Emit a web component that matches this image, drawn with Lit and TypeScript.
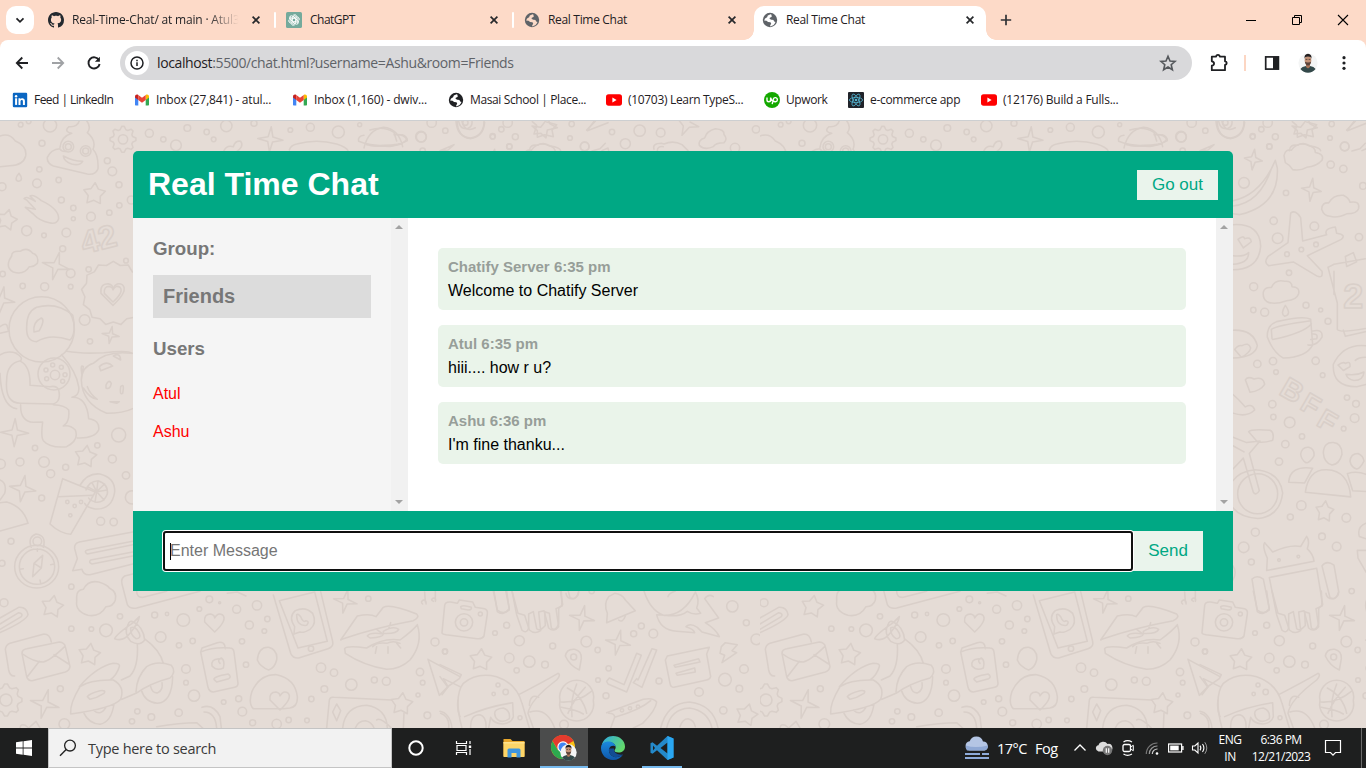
import { LitElement, html, svg, css } from "lit";
import { customElement } from "lit/decorators.js";
import { styleMap } from "lit/directives/style-map.js";

/* ---------- geometry helpers for the wallpaper ---------- */

// Star-like closed path: n points, outer radius R, inner radius r.
const burst = (cx: number, cy: number, n: number, R: number, r: number, rot = 0) => {
  let d = "";
  for (let i = 0; i < n * 2; i++) {
    const a = ((rot - 90) * Math.PI) / 180 + (i * Math.PI) / n;
    const q = i % 2 ? r : R;
    d += `${i ? "L" : "M"}${(cx + q * Math.cos(a)).toFixed(1)} ${(cy + q * Math.sin(a)).toFixed(1)}`;
  }
  return d + "Z";
};

// Cog with flat teeth.
const cog = (cx: number, cy: number, n: number, R: number, r: number) => {
  let d = "";
  for (let i = 0; i < n * 4; i++) {
    const a = ((i - 0.5) * Math.PI * 2) / (n * 4);
    const q = i % 4 < 2 ? R : r;
    d += `${i ? "L" : "M"}${(cx + q * Math.cos(a)).toFixed(1)} ${(cy + q * Math.sin(a)).toFixed(1)}`;
  }
  return d + "Z";
};

const star = (x: number, y: number, rot = 8, R = 34) => burst(x, y, 5, R, R * 0.56, rot);
const spark = (x: number, y: number, rot = 8, R = 38) => burst(x, y, 4, R, R * 0.27, rot);

const heart = (x: number, y: number, s: number) =>
  `M${x} ${y + s}L${x - s} ${y}Q${x - s * 1.1} ${y - s * 0.8} ${x - s * 0.4} ${y - s * 0.8}Q${x} ${y - s * 0.7} ${x} ${y - s * 0.4}Q${x + s * 0.3} ${y - s} ${x + s * 0.8} ${y - s * 0.7}Q${x + s * 1.3} ${y - s * 0.2} ${x} ${y + s}Z`;

interface Sheet {
  x: number;
  y: number;
  sy?: number;
  paths: string[];
  dots: number[][];
  words?: { t: string; x: number; y: number; size: number; rot: number }[];
}

const sheets: Sheet[] = [
  {
    x: 0, y: 120,
    paths: [
      "M0 48Q28 38 45 62Q82 78 77 108Q70 136 30 137L0 140",
      "M180 82Q184 50 215 40Q190 34 207 20Q232 22 238 2M260 2Q275 22 262 38Q290 62 279 88Q296 106 294 146Q286 166 262 162L160 138Q140 130 142 112Q152 88 180 86Q184 96 200 94",
      "M190 108Q220 124 248 124Q240 138 215 132Q192 125 190 108Z",
      cog(369, 58, 8, 39, 30),
      spark(811, 58, 4, 38),
      "M868 90Q872 76 890 72Q950 56 1010 72Q1040 82 1044 92",
      "M672 92Q680 74 700 80Q706 60 722 64Q734 80 706 98",
      "M1092 84Q1104 30 1150 22Q1196 26 1208 80M1092 46Q1072 48 1076 64Q1110 78 1150 76Q1200 76 1222 62Q1222 48 1206 44M1100 74Q1150 84 1205 72",
      "M57 160Q40 180 56 184Q72 180 57 160Z",
      "M72 236Q78 226 106 244L90 228Q100 222 124 242Q176 266 176 296Q170 314 148 308Q118 302 102 284L76 262L106 268L80 240Z",
      star(283, 222, 4, 34), star(20, 300, 14, 32), spark(168, 438, 14, 42), spark(5, 540, 10, 40), spark(332, 645, 10, 26),
      "M35 408Q34 392 60 394Q82 380 98 400Q118 406 112 430Q100 442 88 440Q72 466 40 456Q18 444 28 420Z",
      burst(340, 520, 13, 96, 86, 0), heart(339, 520, 36), heart(339, 520, 26),
      "M80 620Q80 575 110 562Q170 545 218 585Q230 640 210 660Q150 640 110 665Q78 665 80 620ZM102 636Q98 606 124 594Q136 600 118 632Z",
      "M50 700Q20 690 0 705M0 620Q20 605 22 620L26 634L0 640M48 700Q70 712 62 722Q20 730 20 780Q14 850 62 850L160 852Q184 845 176 810Q170 796 150 800L90 796Q92 740 62 724",
      "M0 760Q4 860 50 866M200 694Q245 702 312 698Q386 690 396 700M185 704Q230 756 236 800Q240 826 216 832Q260 830 266 896Q300 900 296 930Q284 956 232 954M62 854Q60 904 100 907L128 906Q122 950 130 962Q150 985 200 980Q238 960 226 930Q210 914 190 918Q210 906 206 870Q196 856 160 854",
      "M396 700Q320 690 280 730Q246 740 244 780Q246 850 320 880Q370 880 398 866M250 740Q240 730 246 765ZM298 740Q320 720 338 738L302 752ZM262 800Q270 822 292 838Q270 836 250 804M318 795Q326 776 334 790Q330 810 318 804ZM362 800Q374 788 368 820Q358 826 362 800ZM340 708Q360 696 362 720ZM330 845H358L350 850Z",
      spark(44, 938, 2, 42), star(257, 1010, 8, 34), burst(68, 1106, 4, 40, 12, 10),
      "M188 1076L286 1116L212 1243Q180 1240 150 1212Z M175 1130L278 1126",
      "M240 1096Q262 1058 300 1062Q346 1074 344 1116Q336 1170 285 1167Q260 1162 254 1150",
      "M258 1110Q266 1084 294 1082Q326 1092 322 1122Q312 1148 290 1147Q270 1142 266 1134M290 1115L262 1100M290 1115L294 1082M290 1115L322 1110M290 1115L312 1140M290 1115L285 1147M290 1115L314 1092M290 1115L276 1088",
      "M0 1080Q22 1090 14 1120L0 1140M0 1148L20 1146Q70 1160 84 1210L0 1233",
    ],
    dots: [[150, 16, 20], [86, 4, 7], [62, 14, 7], [126, 70, 9], [205, 80, 16], [205, 80, 9], [257, 93, 16], [257, 93, 9], [369, 58, 14], [448, 40, 12], [490, 58, 8], [562, 24, 10], [528, 76, 16], [620, 36, 8], [641, 58, 7], [679, 18, 17], [762, 10, 9], [871, 30, 7], [931, 22, 12], [1015, 36, 18], [1079, 14, 6], [322, 122, 9], [337, 154, 13], [176, 180, 8], [111, 190, 13], [118, 148, 8], [184, 240, 9], [220, 264, 8], [220, 296, 6], [273, 290, 13], [357, 194, 9], [358, 256, 8], [328, 278, 8], [394, 240, 12], [80, 332, 15], [132, 346, 7], [199, 338, 13], [188, 386, 9], [6, 200, 12], [378, 422, 7], [266, 448, 8], [212, 460, 13], [8, 462, 8], [68, 498, 8], [134, 500, 12], [212, 500, 7], [125, 628, 98], [254, 600, 16], [270, 664, 8], [162, 762, 48], [165, 765, 14], [158, 735, 6], [184, 742, 6], [195, 764, 6], [188, 784, 6], [138, 750, 6], [140, 776, 6], [105, 984, 8], [356, 945, 21], [292, 976, 8], [337, 1017, 12], [60, 1026, 12], [132, 1026, 16], [197, 1042, 9], [152, 1061, 12], [378, 1066, 11], [2, 1032, 14], [125, 1134, 9], [202, 1146, 5], [243, 1146, 5], [224, 1158, 5], [211, 1186, 5], [396, 1132, 20]],
    words: [{ t: "42", x: 252, y: 402, size: 96, rot: -14 }],
  },
  {
    x: 370, y: 120, sy: 2.579,
    paths: [
      "M0 26Q40 14 72 32L80 54M72 38Q104 36 110 50Q100 64 60 68L0 66M262 3Q262 42 300 48Q340 44 344 6M276 4Q286 34 316 20",
      "M487 4L500 14L492 36L512 34L528 46L532 26L562 20L540 10L536 2M650 26L676 3M666 80L690 74L706 60",
      burst(370, 102, 4, 27, 9, 8), burst(544, 180, 4, 30, 9, 8),
      "M462 92Q466 74 484 78Q504 54 536 66Q556 70 556 84Q584 88 576 104Q560 120 530 122Q510 132 488 128Q480 116 466 110Z",
      "M575 230Q576 212 596 214Q610 192 640 194Q656 200 660 212Q690 208 686 228Q682 242 650 242Q620 254 600 248Q582 248 575 230Z",
      "M309 222Q390 214 424 126L436 104L442 124Q448 220 330 244L309 242M309 208Q380 196 424 126",
      "M482 240Q496 230 512 252L518 312L590 296Q580 280 616 276L620 292Q650 296 634 308L532 350L576 390Q580 410 560 402L490 366L416 376Q400 368 414 352L474 316Z",
      "M309 270Q390 266 392 326Q386 386 309 386M324 308Q340 296 344 306Q362 300 364 314L340 330ZM309 350Q340 354 356 342Q356 370 309 372",
      "M400 444Q404 430 424 432Q436 410 464 416Q486 414 486 430Q510 430 506 448Q500 464 470 466Q430 478 410 468Q398 460 400 444Z",
      "M466 478Q450 500 464 506Q486 502 466 478ZM412 560Q410 530 440 520Q520 504 542 514L548 580Q530 612 460 614Q430 600 412 560ZM426 564L424 540Q440 530 542 518M428 566Q520 550 544 526M548 544Q580 538 576 560Q560 584 534 580M546 552Q566 550 560 564L542 566",
      "M594 380L612 372L706 358M594 380L622 472V540Q630 550 706 538M612 450V390M646 352L670 342L680 366L650 378ZM640 542L646 558L706 546",
      "M708 582Q640 576 610 630Q606 688 680 688L708 682M624 632Q640 622 646 628Q662 620 660 636L640 646ZM676 620Q686 612 706 612M648 656Q680 660 702 650Q700 672 672 672Q652 668 648 656Z",
      "M309 542Q370 540 382 582Q376 612 309 614M314 592Q324 580 336 582Q356 572 362 588Q360 600 334 612ZM346 670Q352 660 372 668Q400 660 404 682Q390 700 360 702ZM309 708Q326 720 346 740Q368 730 374 748Q350 768 309 756",
      "M309 818L350 832L390 828L358 860L388 956Q378 970 370 960L340 872L309 900M356 804Q362 796 420 800Q434 806 428 826Q400 834 382 830ZM309 840L342 856M309 930Q330 906 374 902Q450 906 458 962Q450 1022 384 1028Q330 1024 309 1000",
      "M476 934Q480 890 548 898L524 936ZM526 960Q536 900 590 902Q656 904 662 972ZM580 858Q582 830 610 832Q636 834 636 862Q628 888 606 890Q582 884 580 858ZM512 862Q516 842 536 844Q554 848 552 866Q540 884 528 884Q514 876 512 862ZM660 880Q662 860 684 860Q700 866 702 880Q690 900 680 900Q664 896 660 880ZM652 912Q680 904 708 914M652 912L668 956L708 958",
      burst(584, 1010, 5, 28, 16, 6),
      "M410 1162L412 1130Q396 1100 404 1090L428 1114Q480 1094 512 1100L530 1074Q540 1084 532 1106Q550 1120 552 1138ZM418 1180L560 1156L578 1250L566 1260V1300Q556 1320 544 1310L538 1272L524 1268L526 1304Q510 1320 500 1312L490 1268L476 1274V1310Q470 1326 456 1316L440 1276ZM366 1184Q380 1172 400 1184L418 1260Q400 1280 382 1268ZM576 1150Q590 1134 612 1148L626 1216Q620 1240 600 1232Z",
      "M708 1040Q680 1050 688 1074L708 1080M682 1110L708 1110M682 1110L684 1130L708 1166M309 1150Q322 1166 309 1186",
    ],
    dots: [[154, 44, 15], [368, 42, 8], [394, 24, 8], [418, 68, 8], [602, 115, 11], [644, 68, 13], [640, 126, 11], [342, 162, 16], [468, 188, 8], [699, 170, 10], [431, 260, 11], [443, 305, 16], [553, 274, 13], [687, 302, 11], [471, 346, 7], [514, 334, 7], [558, 321, 7], [477, 394, 8], [371, 430, 12], [370, 490, 8], [404, 496, 12], [528, 478, 9], [572, 490, 6], [594, 519, 9], [382, 629, 11], [429, 622, 11], [438, 650, 7], [557, 621, 11], [578, 658, 7], [651, 716, 8], [678, 732, 10], [674, 769, 13], [641, 796, 7], [427, 733, 11], [430, 766, 8], [479, 780, 16], [466, 836, 11], [516, 816, 8], [447, 881, 11], [383, 964, 60], [514, 994, 14], [481, 1024, 9], [649, 1026, 13], [376, 1063, 12], [341, 1102, 16], [364, 1140, 9], [576, 1074, 10], [620, 1100, 13], [447, 1135, 4], [505, 1126, 4], [665, 1215, 8]],
    words: [{ t: "2", x: 640, y: 484, size: 108, rot: 0 }, { t: "B", x: 444, y: 706, size: 88, rot: 30 }, { t: "F", x: 506, y: 744, size: 84, rot: 30 }, { t: "F", x: 556, y: 786, size: 84, rot: 30 }],
  },
  {
    x: 0, y: 500,
    paths: [
      "M44 200A66 64 0 1 1 176 200A66 64 0 1 1 44 200M58 200A52 52 0 1 1 164 200A52 52 0 1 1 58 200M94 142Q82 112 108 102Q140 106 130 142M98 230L102 190L128 166L124 204ZM102 190L124 204M112 146L112 154M162 192L152 194M60 208L70 206M122 250L120 240",
      "M398 96L238 126Q222 130 224 146L232 176L218 212L246 208Q250 226 270 224L398 192M398 124L262 150Q250 154 262 162L398 134M398 156L272 180Q264 188 276 192L398 168M398 222L374 228Q362 236 366 252L382 314Q390 328 410 324L600 274M410 274Q410 294 430 292L500 274",
      "M230 290Q230 270 250 268Q264 240 296 246Q322 254 328 264Q352 276 346 300Q340 320 318 320Q300 352 264 346Q226 334 230 304Z",
      "M0 354L56 322Q80 320 84 344Q80 362 0 398M0 372L56 338Q70 340 64 350L0 388",
      star(157, 320, 10, 34), star(268, 464, 8, 34), "M682 280L712 276L738 288",
      "M44 528Q30 530 26 510L16 448Q18 434 30 430L132 402Q150 402 154 426M66 460Q66 448 80 446L178 426Q194 428 196 440L210 500Q208 512 196 516L96 542Q84 542 80 530ZM68 462Q100 486 130 486Q150 482 194 440M82 530L118 484M206 492L162 464",
      cog(18, 600, 8, 48, 38), spark(134, 612, 14, 44),
      "M344 416Q352 400 400 368L418 350Q416 368 390 400Q370 426 344 416ZM384 374Q370 400 392 424Q420 440 434 420Q430 380 400 366Q388 360 384 374ZM392 384Q390 404 408 416Q424 416 418 400Q406 376 392 384ZM412 432Q416 500 390 528L364 540M436 418Q480 450 490 490M408 576Q410 530 440 500Q470 480 514 496Q530 516 510 534Q450 550 408 580L366 598M212 638Q210 610 240 560Q270 538 340 540Q376 560 362 598Q340 625 212 642ZM238 560Q290 500 340 490Q362 490 358 500Q350 526 330 540M262 590Q268 580 300 572Q320 570 312 580Q290 594 270 598ZM252 640Q266 670 300 673Q334 666 342 612M280 630Q300 650 318 622M424 570Q434 606 472 610Q516 606 518 530M452 560Q458 582 474 578Q490 570 486 548",
      heart(644, 366, 30),
      "M820 285L872 460Q880 476 896 474L984 446Q1002 440 998 424L962 275M838 302L944 276L982 424L894 444ZM882 402L884 380Q864 350 886 332Q916 318 938 340Q952 370 930 388Q910 400 900 396ZM890 344Q890 380 920 376Q930 364 918 362Q910 370 902 350Q894 340 890 344Z",
      spark(1036, 304, 12, 36), "M1268 312Q1260 306 1270 300Q1280 300 1278 312M1276 306L1274 276M1300 304Q1290 300 1300 294Q1310 294 1306 304L1306 274",
      "M1022 420L1072 348Q1110 340 1128 350L1150 322Q1170 310 1250 342Q1260 352 1240 362Q1130 382 1030 416ZM1034 446Q1040 436 1100 444Q1150 412 1200 420Q1240 390 1252 374Q1270 430 1230 480Q1200 508 1160 508Q1090 496 1036 460ZM1102 408Q1110 396 1150 402Q1150 412 1110 414ZM1150 394Q1180 376 1196 388Q1190 402 1150 400ZM1130 388L1146 400M1166 386L1172 368M1118 440Q1130 426 1160 430Q1180 420 1200 430M1126 460L1130 440M1164 460V440M1190 430L1202 444",
      "M602 456L606 444L652 428Q670 424 674 436L676 446M602 456Q640 440 690 444Q700 444 702 456L714 550Q714 560 704 562L640 576Q628 576 624 562ZM656 476Q632 478 636 498Q650 514 670 504Q676 482 664 474Q650 480 660 490M642 538Q640 530 684 522Q696 530 686 536L650 546Z",
      "M772 480Q776 440 806 442Q834 450 830 480Q824 504 806 510Q780 500 772 480ZM760 626Q744 610 756 574Q780 522 830 524Q886 536 892 590Q894 620 870 624L850 626Z",
      heart(840, 600, 30), "M60 684Q62 670 76 676L86 684L108 664L120 684M606 622Q640 610 660 650L664 684M612 636Q646 636 650 684M470 680Q540 668 590 668L608 684",
      "M980 684L988 600Q990 590 1002 592L1176 600M1010 612L1022 632L1010 662L998 636ZM1028 684Q1036 618 1100 616Q1160 626 1162 684M1066 684Q1074 662 1096 662Q1116 666 1122 684M1130 660Q1140 650 1174 684",
      star(1205, 612, 6, 34), "M1212 640L1210 684M1322 640Q1350 650 1346 684M1374 600Q1370 630 1380 650",
      "M1284 478L1380 530M1284 478L1318 586L1344 560L1330 536L1380 560",
    ],
    dots: [[112, 124, 13], [33, 124, 9], [12, 308, 12], [6, 190, 9], [302, 64, 12], [341, 66, 11], [214, 260, 8], [360, 349, 8], [318, 391, 19], [274, 387, 7], [214, 386, 8], [464, 345, 9], [501, 342, 5], [550, 360, 19], [482, 411, 16], [537, 436, 8], [578, 423, 8], [598, 327, 7], [628, 298, 10], [659, 308, 3], [710, 328, 12], [771, 316, 14], [748, 375, 12], [802, 357, 8], [793, 393, 7], [726, 424, 8], [738, 494, 8], [18, 600, 18], [181, 566, 9], [558, 507, 13], [558, 548, 7], [582, 587, 17], [671, 606, 7], [716, 596, 9], [727, 635, 13], [412, 634, 8], [454, 651, 10], [396, 664, 8], [536, 638, 11], [193, 672, 16], [758, 668, 9], [830, 672, 14], [866, 660, 8], [921, 661, 7], [934, 597, 8], [973, 567, 10], [963, 503, 14], [1002, 518, 11], [1054, 554, 17], [1123, 540, 9], [1159, 544, 12], [1105, 296, 8], [1260, 516, 11], [1268, 548, 7], [1254, 585, 6], [1305, 426, 12], [1335, 455, 7], [1282, 646, 10], [933, 446, 8]],
  },
  {
    x: 440, y: 580,
    paths: [
      "M6 158L14 76Q16 64 32 66L52 70L58 60L98 66L106 82L134 86Q144 90 142 102L132 168Q126 178 112 176L18 164Q6 162 6 158ZM62 80Q70 74 94 82Q96 90 84 90L64 86Z",
      "M160 33L172 90Q190 106 208 90L200 33M216 33L234 100L254 106L268 150Q284 164 302 152L296 96L312 92L326 144Q342 158 356 140L348 86L366 78L364 33M378 40Q380 58 402 56Q416 50 416 36",
      spark(426, 114, 12, 38), spark(534, 188, 12, 38), star(122, 240, 4, 34), star(1114, 80, 12, 34), star(1226, 222, 4, 32), star(920, 405, 14, 34),
      "M500 128L502 100Q490 70 506 50L524 40Q546 42 556 60L586 92ZM536 120Q548 130 556 108",
      "M612 33Q630 90 670 106Q730 108 764 40M766 36Q780 60 770 84L782 100Q760 106 742 94Q720 112 676 106L650 104Q660 150 710 154Q740 156 764 158Q762 148 738 140Q750 128 772 142L786 156L838 170Q828 148 796 128L836 114L794 56Q806 40 820 50M684 50Q686 40 706 33",
      "M376 228Q380 206 404 208Q426 214 424 236L418 270Q390 258 376 228Z",
      "M500 304L508 294L552 314L590 220L604 226L560 336L504 312ZM580 308L590 296L594 300L636 206L650 210L606 322ZM676 240L682 228L808 202L800 222L812 290Q810 298 800 300L702 322Q692 322 690 310ZM702 256L776 236L780 246L706 262ZM708 280L764 264L766 276L712 286ZM844 200L856 188L892 194L876 212L890 218L846 248L854 226L840 220Z",
      "M0 254L64 284L58 296L26 318L6 344M0 290L22 320",
      "M66 444Q40 350 70 310Q110 276 170 290Q230 310 246 370L268 444M74 410Q140 380 218 368L220 410Q214 430 188 432Q160 430 152 412L146 444M92 444Q90 404 120 404Q140 410 138 444M164 400Q164 386 190 384Q212 392 208 416Q190 430 174 420Q164 412 164 400M236 344Q320 300 354 280Q364 284 350 300Q270 360 264 400L280 444M270 396Q320 380 344 444M268 376Q270 340 296 352",
      "M360 362A51 51 0 1 1 460 362A51 51 0 1 1 360 362M362 366Q410 370 454 334M382 324Q430 350 440 400M410 312Q390 360 396 410M364 382Q410 390 430 402M436 322Q400 360 384 400",
      "M500 398L610 358Q640 352 650 366Q648 390 608 430L580 444M506 400Q524 400 524 412L512 444M524 412Q600 390 632 362M662 444Q680 370 748 366Q820 374 834 444M680 444Q692 388 748 384Q804 392 816 444M720 440Q728 416 744 416Q762 420 766 440",
      "M0 394Q30 400 36 444",
    ],
    dots: [[72, 127, 26], [72, 127, 11], [121, 102, 6], [200, 136, 9], [165, 159, 7], [238, 182, 15], [338, 198, 9], [439, 185, 16], [208, 234, 14], [268, 245, 17], [315, 254, 10], [230, 271, 8], [15, 214, 8], [401, 231, 9], [473, 210, 8], [506, 265, 8], [474, 300, 7], [498, 347, 9], [604, 138, 9], [581, 161, 9], [640, 161, 13], [657, 303, 9], [777, 336, 13], [855, 299, 19], [912, 267, 13], [898, 326, 10], [850, 391, 11], [877, 79, 17], [919, 128, 9], [949, 178, 16], [174, 315, 6], [197, 336, 8], [161, 342, 5], [240, 413, 6], [372, 434, 13], [546, 391, 5], [570, 385, 5], [594, 380, 5]],
  },
  {
    x: 380, y: 118,
    paths: [
      "M456 24L482 28L496 10M456 24L472 38L472 58L494 50L520 56L516 36L530 20L500 12M642 10L622 38L684 14M898 8L910 24L906 52L928 28L956 26L930 12",
      "M228 10Q232 58 272 60Q312 54 312 10M236 10Q240 34 262 32Q278 26 276 10M180 98L222 80L204 96ZM448 98Q450 78 472 82Q490 70 510 84Q540 88 542 98M666 98L684 90L686 98",
      "M958 82Q954 66 974 60Q980 38 1006 32Q1034 34 1032 50Q1044 62 1032 74Q1006 74 1000 86Q974 98 958 82ZM822 94Q816 76 844 76L852 78Q880 66 906 80L924 98M832 98Q832 84 850 86",
    ],
    dots: [[123, 56, 16], [196, 38, 8], [155, 14, 14], [383, 14, 14], [338, 56, 7], [406, 56, 9], [388, 86, 8], [575, 18, 8], [570, 60, 7], [614, 86, 13], [696, 42, 8], [736, 77, 15], [779, 38, 17], [842, 44, 13], [1065, 90, 14], [1128, 34, 11], [256, 14, 8], [128, 98, 8]],
  },
];

const motifs = sheets.map((s) => {
  const k = 3 / (s.sy ?? 3);
  return svg`<g transform="translate(${s.x} ${s.y}) scale(.33333)">
    <g transform="scale(1 ${k})">${s.paths.map((d) => svg`<path d=${d} vector-effect="non-scaling-stroke"/>`)}</g>
    ${s.dots.map(([x, y, r]) => svg`<circle cx=${x} cy=${y * k} r=${r} vector-effect="non-scaling-stroke"/>`)}
    ${(s.words ?? []).map((w) => svg`<text transform="translate(${w.x} ${w.y * k}) rotate(${w.rot})" font-size=${w.size} vector-effect="non-scaling-stroke">${w.t}</text>`)}
  </g>`;
});

const TILE = 760;

@customElement("doodle-wallpaper")
class DoodleWallpaper extends LitElement {
  static styles = css`
    :host { display: block; width: 1366px; height: 607px; }
    svg { display: block; }
    .lines { fill: none; stroke: #d9cfc9; stroke-width: 1.55; stroke-linejoin: round; stroke-linecap: round; }
    text { font-family: "Liberation Sans", sans-serif; font-weight: bold; }
  `;
  render() {
    return html`<svg class="lines" width="1366" height="607" viewBox="0 121 1366 607" aria-hidden="true">
      ${[0, TILE].map((x) => svg`<svg x=${x} y="121" width=${TILE} height="607" viewBox="0 121 760 607">${motifs}</svg>`)}
    </svg>`;
  }
}

/* ---------- icons ---------- */

const closeIcon = html`<svg width="16" height="16" viewBox="0 0 16 16"><path d="M4.6 4.6l6.8 6.8M11.4 4.6l-6.8 6.8" stroke="#26282b" stroke-width="1.7" fill="none"/></svg>`;
const github = html`<svg width="16" height="16" viewBox="0 0 16 16"><path fill="#24292f" d="M8 0C3.58 0 0 3.58 0 8c0 3.54 2.29 6.53 5.47 7.59.4.07.55-.17.55-.38 0-.19-.01-.82-.01-1.49-2.01.37-2.53-.49-2.69-.94-.09-.23-.48-.94-.82-1.13-.28-.15-.68-.52-.01-.53.63-.01 1.08.58 1.23.82.72 1.21 1.87.87 2.33.66.07-.52.28-.87.51-1.07-1.78-.2-3.64-.89-3.64-3.95 0-.87.31-1.59.82-2.15-.08-.2-.36-1.02.08-2.12 0 0 .67-.21 2.2.82.64-.18 1.32-.27 2-.27s1.36.09 2 .27c1.53-1.04 2.2-.82 2.2-.82.44 1.1.16 1.92.08 2.12.51.56.82 1.27.82 2.15 0 3.07-1.87 3.75-3.65 3.95.29.25.54.73.54 1.48 0 1.07-.01 1.93-.01 2.2 0 .21.15.46.55.38A8.01 8.01 0 0 0 16 8c0-4.42-3.58-8-8-8z"/></svg>`;
const openai = html`<svg width="16" height="16" viewBox="0 0 16 16"><rect width="16" height="16" rx="1.6" fill="#74aa9c"/><g fill="none" stroke="#fff" stroke-width=".85">${[0, 60, 120, 180, 240, 300].map((a) => svg`<path transform="rotate(${a} 8 8)" d="M6.1 9.1V5.2a2.6 2.6 0 0 1 4.6-1.5M6.1 6.9l3.3-1.9 3.3 1.9"/>`)}</g></svg>`;
const globe = (c: string, hole: string) => html`<svg width="16" height="16" viewBox="0 0 16 16"><circle cx="8" cy="8" r="7.2" fill=${c}/><path fill=${hole} d="M8.6 2.2L5.8 3.4 5.1 5.2l-2 1.2-1 2.2 2.4.2 1.6 1.2 2.4.3.7 1.4-1 1.6v1.1c2.6-.4 4.6-2.1 5.3-4.4l-1.3-.6-.9-1.7-2.2-.2L8 6l1.6-.6.7-1.4-.7-1.6z"/><path fill=${c} d="M9.4 1.8l2.4 1.6-.6 2.2 1.7.9-.5 1.6-2-.6-2.3-.3-.7-1.3 2.3-.9z"/></svg>`;
const gmail = html`<svg width="16" height="16" viewBox="0 0 16 16"><path fill="#4285f4" d="M1 4.2v8.3c0 .6.4 1 1 1h2.3V7z"/><path fill="#34a853" d="M15 4.2v8.3c0 .6-.4 1-1 1h-2.3V7z"/><path fill="#c5221f" d="M1 4.6C1 2.8 2.8 2 4.3 3v5L1 5.6z"/><path fill="#fbbc04" d="M15 4.6c0-1.8-1.8-2.6-3.3-1.6v5L15 5.6z"/><path fill="#ea4335" d="M4.3 3L8 5.8 11.7 3v5L8 10.8 4.3 8z"/></svg>`;
const youtube = html`<svg width="16" height="16" viewBox="0 0 16 16"><rect y="2.3" width="16" height="11.4" rx="2.6" fill="#f00"/><path fill="#fff" d="M6.4 5.6v4.8L10.6 8z"/></svg>`;
const linkedin = html`<svg width="16" height="16" viewBox="0 0 16 16"><rect x=".8" y=".8" width="14.4" height="14.4" rx="1.2" fill="#0a66c2"/><g fill="#fff"><circle cx="4.1" cy="4.3" r="1.2"/><rect x="3.1" y="6.3" width="2" height="6.6"/><path d="M6.5 6.3h1.9v.9c.9-1.5 4.5-1.6 4.5 1.8v3.9h-2V9.6c0-2.1-2.4-1.9-2.4 0v3.3h-2z"/></g></svg>`;
const upwork = html`<svg width="16" height="16" viewBox="0 0 16 16"><circle cx="8" cy="8" r="8" fill="#14a800"/><path d="M3 5.6v2.3a1.8 1.8 0 0 0 3.6 0V5.6c.5 1.8 1.5 3.4 2.7 4M8.2 12.2l1.1-5c.8-2.6 4.2-1.7 4.1.5-.1 2.4-3 2.6-4.3 1" fill="none" stroke="#fff" stroke-width="1.4"/></svg>`;
const reactIcon = html`<svg width="16" height="16" viewBox="0 0 16 16"><rect width="16" height="16" rx="1" fill="#20232a"/><g fill="none" stroke="#53b4d1" stroke-width=".8">${[0, 60, 120].map((a) => svg`<ellipse cx="8" cy="8" rx="6.6" ry="2.6" transform="rotate(${a} 8 8)"/>`)}</g><circle cx="8" cy="8" r="1.3" fill="#53b4d1"/></svg>`;
const portrait = (s: number) => html`<svg width=${s} height=${s} viewBox="0 0 20 20"><circle cx="10" cy="10" r="9.6" fill="#f4f5f5"/><path d="M2.4 16Q4 13.6 8 13h4q4 .6 5.600 3a9.600 9.600 0 0 1-15.200 0z" fill="#33494a"/><path d="M8 10h4v4l-2 1.400-2-1.400z" fill="#a97458"/><ellipse cx="10" cy="7.300" rx="3.300" ry="4.400" fill="#c39277"/><path d="M6.600 6Q5.800 1.200 10 .8q4.200.4 3.400 5.200Q13 3.600 10 3.600T6.600 6z" fill="#231f20"/><path d="M6.900 8.800q.5 3.600 3.100 3.700 2.600-.1 3.100-3.700-1 .8-3.100.8t-3.100-.8z" fill="#59433a"/><path d="M7.600 6.400h1.800M10.600 6.400h1.800" stroke="#3a2a26" stroke-width=".7"/></svg>`;

/* ---------- browser frame ---------- */

const tabs = [
  { icon: github, title: "Real-Time-Chat/ at main · Atul3", cls: "faded t0" },
  { icon: openai, title: "ChatGPT", cls: "t1" },
  { icon: globe("#5f6368", "#fbdac8"), title: "Real Time Chat", cls: "t2" },
  { icon: globe("#5f6368", "#fff"), title: "Real Time Chat", cls: "active" },
];

const bookmarks = [
  { icon: linkedin, t: "Feed | LinkedIn", ls: -0.55 },
  { icon: gmail, t: "Inbox (27,841) - atul...", ls: -0.2 },
  { icon: gmail, t: "Inbox (1,160) - dwiv...", ls: -0.2 },
  { icon: globe("#202124", "#fff"), t: "Masai School | Place...", ls: -0.38 },
  { icon: youtube, t: "(10703) Learn TypeS...", ls: -0.32 },
  { icon: upwork, t: "Upwork", ls: -0.42 },
  { icon: reactIcon, t: "e-commerce app", ls: -0.3 },
  { icon: youtube, t: "(12176) Build a Fulls...", ls: -0.22 },
];

@customElement("browser-frame")
class BrowserFrame extends LitElement {
  static styles = css`
    :host { display: block; height: 121px; background: #fddac8; font-family: "Open Sans", "Noto Sans", sans-serif; color: #1f2023; }
    svg { display: block; flex: none; }
    .strip { display: flex; height: 40px; padding-left: 6px; }
    .find { width: 28px; height: 28px; margin: 6px 6px 0 0; border-radius: 10px; background: #fff; display: grid; place-items: center; }
    .tab { position: relative; width: 232px; margin-right: 6px; height: 34px; margin-top: 6px; box-sizing: border-box; padding: 0 8px 6px; display: flex; align-items: center; gap: 8px; border-radius: 10px 10px 0 0; }
    .tab .name { flex: 1; white-space: nowrap; overflow: hidden; font-size: 12px; letter-spacing: -0.32px; line-height: 18px; margin-right: -2px; }
    .t0 .name { letter-spacing: -0.18px; }
    .t1 .name { letter-spacing: -0.5px; }
    .faded .name { -webkit-mask-image: linear-gradient(90deg, #000 80%, transparent 98%); mask-image: linear-gradient(90deg, #000 80%, transparent 98%); }
    .t0::after, .t1::after { content: ""; position: absolute; right: -4px; top: 6px; width: 2px; height: 16px; background: #fff; border-radius: 1px; }
    .active { background: #fff; }
    .active::before, .active::after { content: ""; position: absolute; bottom: 0; width: 10px; height: 10px; }
    .active::before { left: -10px; background: radial-gradient(circle at 0 0, transparent 9.5px, #fff 10px); }
    .active::after { right: -10px; background: radial-gradient(circle at 100% 0, transparent 9.5px, #fff 10px); }
    .plus { margin: 12px auto 0 6px; }
    .win { display: flex; margin-top: 12px; gap: 30px; padding-right: 15px; }
    .bar { height: 46px; background: #fff; border-radius: 8px 8px 0 0; display: flex; align-items: center; padding-left: 13px; box-sizing: border-box; }
    .nav { display: flex; gap: 18px; width: 107px; }
    .url { width: 1072px; height: 34px; border-radius: 17px; background: #d9d9db; display: flex; align-items: center; box-sizing: border-box; padding: 0 15px 0 5px; }
    .info { width: 24px; height: 24px; border-radius: 50%; background: #fff; display: grid; place-items: center; margin-right: 8px; }
    .addr { flex: 1; font-size: 14px; letter-spacing: -0.38px; color: #5f6368; white-space: nowrap; padding-bottom: 1px; }
    .addr b { font-weight: 400; color: #1f2023; }
    .tools { display: flex; align-items: center; margin-left: 17px; }
    .sep { width: 2px; height: 16px; background: #fcd6c3; margin: 0 17px 0 15px; }
    .tools .face { margin: 0 17px 0 17px; }
    .marks { height: 34px; background: #fff; display: grid; grid-template-columns: 122px 158px 156px 158px 158px 84px 133px 200px; padding: 0 0 6px 12px; box-sizing: border-box; align-items: center; }
    .mark { display: flex; align-items: center; gap: 6px; font-size: 12px; white-space: nowrap; }
    .mark span { padding-bottom: 1px; line-height: 17px; }
    .edge { height: 1px; background: #cdcfd1; }
  `;
  render() {
    return html`
      <div class="strip">
        <div class="find"><svg width="10" height="10" viewBox="0 0 10 10"><path d="M1.500 3.300L5 6.800l3.500-3.500" fill="none" stroke="#1f2023" stroke-width="1.700"/></svg></div>
        ${tabs.map((t) => html`<div class="tab ${t.cls}">${t.icon}<span class="name">${t.title}</span>${closeIcon}</div>`)}
        <svg class="plus" width="16" height="16" viewBox="0 0 16 16"><path d="M8 2.800v10.400M2.800 8h10.400" stroke="#303236" stroke-width="1.700"/></svg>
        <div class="win">
          <svg width="16" height="16" viewBox="0 0 16 16"><path d="M3 8.500h10" stroke="#000"/></svg>
          <svg width="16" height="16" viewBox="0 0 16 16"><path d="M3.500 5.500h7v7h-7zM5.500 5.500v-2h7v7h-2" fill="none" stroke="#000"/></svg>
          <svg width="16" height="16" viewBox="0 0 16 16"><path d="M3 3l10 10M13 3L3 13" stroke="#000" stroke-width="1.100"/></svg>
        </div>
      </div>
      <div class="bar">
        <div class="nav">
          <svg width="18" height="18" viewBox="0 0 18 18"><path d="M15 9H4M9.300 3.500L3.800 9l5.500 5.500" fill="none" stroke="#1f2023" stroke-width="1.800"/></svg>
          <svg width="18" height="18" viewBox="0 0 18 18"><path d="M3 9h11M8.700 3.500L14.200 9l-5.500 5.500" fill="none" stroke="#a0a2a5" stroke-width="1.800"/></svg>
          <svg width="18" height="18" viewBox="0 0 18 18"><path d="M14 6.200A5.600 5.600 0 1 0 14.600 10" fill="none" stroke="#1f2023" stroke-width="1.900"/><path d="M14.900 2.700v5h-5z" fill="#1f2023"/></svg>
        </div>
        <div class="url">
          <div class="info"><svg width="16" height="16" viewBox="0 0 16 16"><circle cx="8" cy="8" r="6" fill="none" stroke="#1f2023" stroke-width="1.500"/><path d="M8 7.300v3.700M8 4.700v1.500" stroke="#1f2023" stroke-width="1.500"/></svg></div>
          <div class="addr"><b>localhost</b>:5500/chat.html?username=Ashu&amp;room=Friends</div>
          <svg width="18" height="18" viewBox="0 0 18 18"><path d="M9 2.300l2 4.700 5.100.4-3.900 3.300 1.200 5L9 13l-4.400 2.700 1.200-5L1.900 7.400 7 7z" fill="none" stroke="#55585c" stroke-width="1.600"/></svg>
        </div>
        <div class="tools">
          <svg width="20" height="20" viewBox="0 0 20 20"><path d="M2.800 3.700h4.300c.2-2.400 3.500-2.400 3.700 0H16v4.600c2.300.2 2.300 3.300 0 3.500v5.400H2.800v-4.500c3-.5 3-4 0-4.400z" fill="none" stroke="#1f2023" stroke-width="1.800" stroke-linejoin="round"/></svg>
          <i class="sep"></i>
          <svg width="18" height="18" viewBox="0 0 18 18"><rect x="2.700" y="2.900" width="12.700" height="12.200" fill="none" stroke="#1f2023" stroke-width="1.700"/><rect x="10" y="2.900" width="5.500" height="12.200" fill="#1f2023"/></svg>
          <div class="face">${portrait(20)}</div>
          <svg width="18" height="18" viewBox="0 0 18 18" fill="#1f2023"><circle cx="9" cy="3.700" r="1.600"/><circle cx="9" cy="9" r="1.600"/><circle cx="9" cy="14.300" r="1.600"/></svg>
        </div>
      </div>
      <div class="marks">${bookmarks.map((b) => html`<div class="mark">${b.icon}<span style=${styleMap({ letterSpacing: b.ls + "px" })}>${b.t}</span></div>`)}</div>
      <div class="edge"></div>`;
  }
}

/* ---------- chat page ---------- */

const messages = [
  { who: "Chatify Server 6:35 pm", text: "Welcome to Chatify Server" },
  { who: "Atul 6:35 pm", text: "hiii.... how r u?" },
  { who: "Ashu 6:36 pm", text: "I'm fine thanku..." },
];

const gutter = html`<div class="gutter"><i class="up"></i><i class="down"></i></div>`;

@customElement("chat-room")
class ChatRoom extends LitElement {
  static styles = css`
    :host { display: block; width: 1100px; font: 16px "Liberation Sans", Arial, sans-serif; }
    .card { border-radius: 5px 5px 0 0; overflow: hidden; }
    header { background: #00a884; height: 67px; box-sizing: border-box; padding: 0 15px; display: flex; justify-content: space-between; align-items: center; }
    h1 { margin: 0; color: #fff; font-size: 32px; line-height: 37px; }
    .btn { background: #eaf4ec; color: #00a884; font-size: 17px; display: grid; place-items: center; }
    .out { width: 81px; height: 30px; margin-top: 1px; }
    .body { display: flex; height: 293px; }
    .side { width: 258px; box-sizing: border-box; padding: 20px; background: #f5f5f5; color: #777; }
    .gutter { width: 17px; background: #f1f1f1; display: flex; flex-direction: column; justify-content: space-between; align-items: center; padding: 7px 1px 7px 0; box-sizing: border-box; }
    .gutter i { border: 4px solid transparent; }
    .gutter .up { border-top: 0; border-bottom-color: #a3a3a3; }
    .gutter .down { border-bottom: 0; border-top-color: #a3a3a3; }
    h3 { margin: 0; font-size: 18.72px; line-height: 21px; }
    .room { margin: 16px 0 20px; padding: 10px; font-size: 20px; font-weight: bold; line-height: 23px; background: #dcdcdc; }
    .user { color: #f00; line-height: 18px; margin-top: 20px; }
    h3 + .user { margin-top: 26px; }
    .feed { flex: 1; background: #fff; padding: 30px; display: flex; flex-direction: column; gap: 15px; }
    .msg { height: 62px; box-sizing: border-box; padding: 10px; border-radius: 5px; background: #eaf4ea; }
    .who { font-size: 15px; font-weight: bold; line-height: 17px; color: #979e99; margin-bottom: 7px; }
    .said { line-height: 18px; color: #000; }
    footer { background: #00a884; height: 80px; box-sizing: border-box; padding: 20px 30px; display: flex; }
    .field { flex: 1; box-sizing: border-box; border: 2px solid #101010; border-radius: 3px; box-shadow: 0 0 0 1px #fff; background: #fff; display: flex; align-items: center; padding-left: 5px; color: #757575; z-index: 1; }
    .caret { width: 1px; height: 17px; background: #000; margin-right: -1px; }
    .send { width: 70px; }
  `;
  render() {
    return html`<div class="card">
      <header><h1>Real Time Chat</h1><div class="btn out">Go out</div></header>
      <div class="body">
        <div class="side">
          <h3>Group:</h3>
          <div class="room">Friends</div>
          <h3>Users</h3>
          <div class="user">Atul</div>
          <div class="user">Ashu</div>
        </div>
        ${gutter}
        <div class="feed">${messages.map((m) => html`<div class="msg"><div class="who">${m.who}</div><div class="said">${m.text}</div></div>`)}</div>
        ${gutter}
      </div>
      <footer><div class="field"><i class="caret"></i>Enter Message</div><div class="btn send">Send</div></footer>
    </div>`;
  }
}

/* ---------- desktop taskbar ---------- */

const explorer = html`<svg width="24" height="24" viewBox="0 0 24 24"><path d="M1.500 3h7l2 2h12v15h-21z" fill="#e8a72c"/><path d="M1.500 6h21v15h-21z" fill="#fdd568"/><path d="M1.500 6h21v1.500h-21z" fill="#fee28f"/><path d="M5.500 21.500V14q0-1.500 1.500-1.500h10q1.500 0 1.500 1.500v7.500h-4V17h-5v4.500z" fill="#3f96de"/></svg>`;
const chrome = html`<svg width="28" height="28" viewBox="0 0 28 28"><circle cx="13" cy="13" r="12" fill="#fbc116"/><path d="M13 13L2.600 7A12 12 0 0 1 23.400 7z" fill="#e33b2e"/><path d="M2.600 7A12 12 0 0 0 13 25l5.200-9H7.800z" fill="#2da94f"/><path d="M2.600 7L8 16l5-9h10.400A12 12 0 0 0 2.600 7z" fill="#e33b2e"/><circle cx="13" cy="13" r="5.700" fill="#fff"/><circle cx="13" cy="13" r="4.500" fill="#4285f4"/><g transform="translate(10 10)">${portrait(17)}</g></svg>`;
const edge = html`<svg width="26" height="26" viewBox="0 0 26 26"><defs><linearGradient id="a" x1="0" x2="1" y1="0" y2=".5"><stop stop-color="#2ba8e8"/><stop offset="1" stop-color="#62d86c"/></linearGradient><linearGradient id="b" x1="0" x2="0" y1="0" y2="1"><stop stop-color="#1b8ade"/><stop offset="1" stop-color="#0f56a8"/></linearGradient></defs><path d="M1.500 11C3 4 8 1 13 1c7 0 12 5 12 10.500 0 4-3 6-6.500 6-3 0-4-1-4-2s1.300-1.500 1.200-3.500C15.500 9 12 7 8.500 7 5 7 2.500 9 1.500 11z" fill="url(#a)"/><path d="M1 13c0-4 3.500-6.500 7.500-6.500 4 0 7 2.500 7.200 5.500-1-1.500-5-2-6.500 1.500-1.500 4.500 3 9.500 8.300 8.500 2.500-.5 4-1.500 5.500-2.500-2 3.500-5.500 5.500-10 5.500C6.500 25 1 20 1 13z" fill="url(#b)"/><path d="M9.200 13.500c-1.500 4.500 3 9.500 8.300 8.500 2.500-.5 4-1.500 5.500-2.500-3.500.6-9.500-.500-9-6z" fill="#124c93"/></svg>`;
const vscode = html`<svg width="26" height="26" viewBox="0 0 26 26"><path d="M18.500 1L8 10.800 3.500 7.300 1.500 8.300v9.400l2 1L8 15.200 18.500 25l6-2.500v-19zM18.500 7.500v11L11.500 13zM4 10.500L6 13l-2 2.500z" fill="#2489ca" fill-rule="evenodd"/><path d="M18.500 1l6 2.500v19l-6 2.500z" fill="#2aa7f2"/></svg>`;

const pinned = [
  { w: 48, cls: "", icon: html`<svg width="18" height="18" viewBox="0 0 18 18"><circle cx="9" cy="9" r="6.700" fill="none" stroke="#fff" stroke-width="2"/></svg>` },
  { w: 48, cls: "", icon: html`<svg width="18" height="18" viewBox="0 0 18 18"><path d="M1.500 2v2.500h10V2M1.500 16v-2.500h10V16M2 6.500h9v5H2zM15 2v3M15 10v6" fill="none" stroke="#fff" stroke-width="1.200"/><path d="M13.800 6.500h2.400V9h-2.400z" fill="#fff"/></svg>` },
  { w: 52, cls: "", icon: explorer },
  { w: 48, cls: "lit open", icon: chrome },
  { w: 50, cls: "", icon: edge },
  { w: 48, cls: "open short", icon: vscode },
];

@customElement("task-bar")
class TaskBar extends LitElement {
  static styles = css`
    :host { display: flex; height: 40px; background: #1e1f1f; color: #fff; font-family: "Open Sans", "Noto Sans", sans-serif; box-sizing: border-box; }
    svg { display: block; flex: none; }
    .start { width: 48px; display: grid; place-items: center; }
    .search { width: 344px; box-sizing: border-box; border: 1px solid #c4c4c4; background: #f2f2f2; color: #3a3a3a; display: flex; align-items: center; gap: 11px; padding-left: 10px; font-size: 14.5px; letter-spacing: -0.28px; }
    .app { display: grid; place-items: center; box-sizing: border-box; position: relative; }
    .lit { background: #4b4c4c; }
    .open::after { content: ""; position: absolute; left: 0; right: 0; bottom: 0; height: 2px; background: #76b9ed; }
    .short::after { left: 4px; right: 4px; }
    .tray { margin-left: auto; display: flex; align-items: center; }
    .deg { font-size: 14.5px; letter-spacing: -0.5px; margin-left: 7px; width: 38px; white-space: nowrap; }
    .fog { font-size: 14.5px; letter-spacing: -0.5px; width: 36px; }
    .sys { display: flex; gap: 6px; }
    .two { font-size: 12px; line-height: 17px; text-align: center; letter-spacing: -0.45px; white-space: nowrap; padding-bottom: 1px; }
    .lang { width: 42px; }
    .clock { width: 60px; letter-spacing: -0.52px; }
    .note { margin: 0 19px 0 13px; }
    .peek { width: 1px; height: 40px; background: #6a6a6a; margin-right: 4px; }
  `;
  render() {
    return html`
      <div class="start"><svg width="16" height="16" viewBox="0 0 16 16"><path fill="#fff" d="M0 2.300l6.700-1v6.300H0zM7.500 1.200L16 0v7.600H7.500zM0 8.400h6.700v6.300l-6.700-1zM7.500 8.400H16V16l-8.500-1.200z"/></svg></div>
      <div class="search"><svg width="18" height="18" viewBox="0 0 18 18"><circle cx="11" cy="6.600" r="5.400" fill="none" stroke="#222" stroke-width="1.300"/><path d="M7.200 10.500L1 16.700" stroke="#222" stroke-width="1.400"/></svg>Type here to search</div>
      ${pinned.map((p) => html`<div class="app ${p.cls}" style=${styleMap({ width: p.w + "px" })}>${p.icon}</div>`)}
      <div class="tray">
        <svg width="26" height="24" viewBox="0 0 26 24"><path d="M5.500 14.500a4.700 4.700 0 0 1 .2-9.300A7 7 0 0 1 19 5.500a4.600 4.600 0 0 1 1.500 9z" fill="#b4c5e4"/><path d="M3 14.500a5 5 0 0 1-1-5q9 3 22 0a5 5 0 0 1-3 5z" fill="#8fa8d4"/><path d="M1 18h15M18 18h7M1 22h24" stroke="#8fabd9" stroke-width="2"/></svg>
        <span class="deg">17°C</span><span class="fog">Fog</span>
        <div class="sys">
          <svg width="18" height="18" viewBox="0 0 18 18"><path d="M3.500 11.500L9 6l5.500 5.500" fill="none" stroke="#fff" stroke-width="1.300"/></svg>
          <svg width="18" height="18" viewBox="0 0 18 18"><path d="M3.500 12.500a3.200 3.200 0 0 1 0-6.300 5 5 0 0 1 9-1.200 3.800 3.800 0 0 1 2 7.500z" fill="#ddd"/><circle cx="12.500" cy="11.500" r="4.700" fill="#777"/><path d="M11.300 9.300v4.400M13.700 9.300v4.400" stroke="#fff" stroke-width="1.200"/></svg>
          <svg width="18" height="18" viewBox="0 0 18 18"><rect x="4" y="5.500" width="7.500" height="7" rx="1.500" fill="none" stroke="#fff" stroke-width="1.300"/><path d="M11.500 8l2.800-1.700v5.400L11.500 10" fill="none" stroke="#fff"/><path d="M4.500 3q4-2.600 8.500 0M4.500 15q4 2.600 8.500 0" fill="none" stroke="#fff" stroke-width="1.200"/></svg>
          <svg width="18" height="18" viewBox="0 0 18 18" fill="none" stroke-width="1.200"><circle cx="14" cy="14.500" r="1.300" fill="#fff"/><path d="M9.300 15A5 5 0 0 1 14.500 10" stroke="#ccc"/><path d="M6.300 15A8 8 0 0 1 14.500 7" stroke="#999"/><path d="M3.300 15A11 11 0 0 1 14.500 4" stroke="#777"/></svg>
          <svg width="18" height="18" viewBox="0 0 18 18"><rect x="1.600" y="5" width="13" height="8" fill="none" stroke="#fff" stroke-width="1.200"/><rect x="3.200" y="6.600" width="8.500" height="4.800" fill="#fff"/><path d="M15.900 7v4" stroke="#fff" stroke-width="1.400"/></svg>
          <svg width="18" height="18" viewBox="0 0 18 18" fill="none"><path d="M1.500 7v4h2.300l3.200 3V4L3.800 7z" stroke="#fff" stroke-width="1.100"/><path d="M9 6.700q1.700 2.300 0 4.600M11.500 5q2.800 4 0 8" stroke="#fff" stroke-width="1.100"/><path d="M13.800 3.200q4 5.800 0 11.600" stroke="#999"/></svg>
        </div>
        <div class="two lang">ENG<br />IN</div>
        <div class="two clock">6:36 PM<br />12/21/2023</div>
        <svg class="note" width="18" height="18" viewBox="0 0 18 18"><path d="M1.500 1.500h15v12h-5L9 16.200 6.500 13.500h-5z" fill="none" stroke="#fff" stroke-width="1.200"/></svg>
        <i class="peek"></i>
      </div>`;
  }
}

@customElement("app-root")
class AppRoot extends LitElement {
  static styles = css`
    :host { display: grid; grid-template-rows: 121px 607px 40px; width: 1366px; height: 768px; overflow: hidden; }
    .page { display: grid; background: #e5dcd6; overflow: hidden; }
    .page > * { grid-area: 1 / 1; }
    .room { margin: 30px 0 0 133px; }
  `;
  render() {
    return html`
      <browser-frame></browser-frame>
      <div class="page"><doodle-wallpaper></doodle-wallpaper><chat-room class="room"></chat-room></div>
      <task-bar></task-bar>`;
  }
}
